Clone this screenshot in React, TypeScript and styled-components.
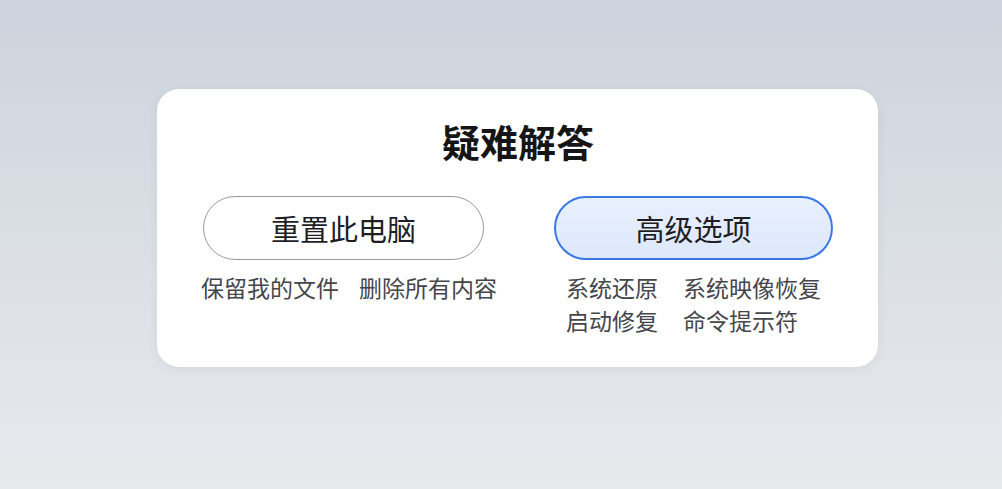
import React from "react";
import styled, { createGlobalStyle } from "styled-components";

const Global = createGlobalStyle`
  html, body { margin: 0; padding: 0; }
  body {
    font-family: "Noto Sans CJK SC", "Noto Sans", sans-serif;
    background: linear-gradient(180deg, #ccd3dc 0%, #d9dee4 45%, #e7e9ed 100%);
    min-height: 489px;
  }
`;

const Page = styled.div`
  height: 489px;
  display: flex;
  align-items: flex-start;
  justify-content: center;
  padding-top: 89px;
  box-sizing: border-box;
  padding-left: 33px;
`;

const Card = styled.div`
  width: 721px;
  height: 278px;
  box-sizing: border-box;
  background: #ffffff;
  border-radius: 22px;
  padding: 29px 45px 0 46px;
  display: flex;
  flex-direction: column;
  align-items: stretch;
  box-shadow: 0 2px 10px rgba(120, 130, 145, 0.12);
`;

const Title = styled.h1`
  margin: 0;
  text-align: center;
  font-size: 38px;
  line-height: 46px;
  font-weight: 700;
  color: #151515;
  letter-spacing: 0;
`;

const Columns = styled.div`
  margin-top: 32px;
  display: grid;
  grid-template-columns: 281px 279px;
  column-gap: 70px;
`;

const Column = styled.div`
  display: flex;
  flex-direction: column;
`;

const Pill = styled.button<{ $primary?: boolean }>`
  height: 64px;
  box-sizing: border-box;
  border-radius: 32px;
  border: ${(p) => (p.$primary ? "2px solid #3a78e6" : "1px solid #9a9a9a")};
  background: ${(p) =>
    p.$primary ? "linear-gradient(180deg, #e9f0fd 0%, #dde8fc 100%)" : "#ffffff"};
  font-family: inherit;
  font-size: 29px;
  line-height: 1;
  color: #1e1e24;
  padding: 0;
  display: flex;
  align-items: center;
  justify-content: center;
  cursor: pointer;
`;

const Options = styled.div<{ $indent: number; $gap: number }>`
  margin-top: 11px;
  margin-left: ${(p) => p.$indent}px;
  display: grid;
  grid-template-columns: auto auto;
  justify-content: start;
  column-gap: ${(p) => p.$gap}px;
  white-space: nowrap;
`;

const Option = styled.span`
  font-size: 23px;
  line-height: 33px;
  color: #45464b;
`;

export default function App() {
  return (
    <>
      <Global />
      <Page>
        <Card>
          <Title>疑难解答</Title>
          <Columns>
            <Column>
              <Pill>重置此电脑</Pill>
              <Options $indent={-2} $gap={20}>
                <Option>保留我的文件</Option>
                <Option>删除所有内容</Option>
              </Options>
            </Column>
            <Column>
              <Pill $primary>高级选项</Pill>
              <Options $indent={12} $gap={25}>
                <Option>系统还原</Option>
                <Option>系统映像恢复</Option>
                <Option>启动修复</Option>
                <Option>命令提示符</Option>
              </Options>
            </Column>
          </Columns>
        </Card>
      </Page>
    </>
  );
}
